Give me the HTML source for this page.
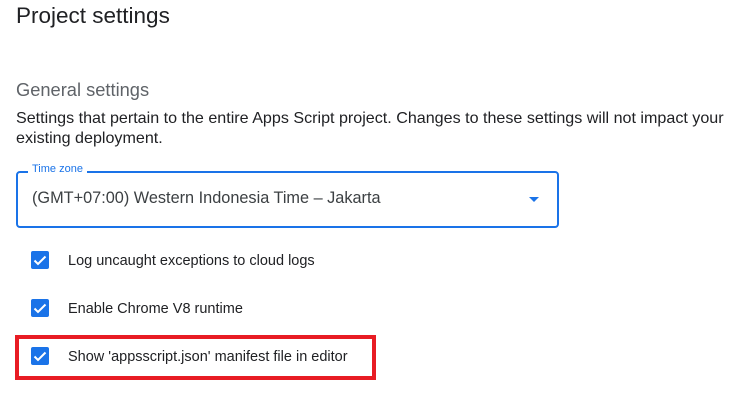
<!DOCTYPE html>
<html><head><style>
body{margin:0;width:753px;height:402px;background:#fff;font-family:"Liberation Sans",sans-serif;position:relative;overflow:hidden;color:#202124}
.a{position:absolute;white-space:nowrap}
.cb{position:absolute;left:31px;width:18px;height:18px;background:#1a73e8;border-radius:2px}
.cb svg{position:absolute;left:0;top:0}
</style></head><body>
<div class="a" style="left:16px;top:3px;font-size:22.5px;color:#202124">Project settings</div>
<div class="a" style="left:16px;top:79px;font-size:18.3px;color:#5f6368">General settings</div>
<div class="a" style="left:16px;top:108px;font-size:16.1px;line-height:20px;color:#202124">Settings that pertain to the entire Apps Script project. Changes to these settings will not impact your<br>existing deployment.</div>
<div style="position:absolute;left:16px;top:171px;width:539px;height:53px;border:2px solid #1a73e8;border-radius:4px"></div>
<div class="a" style="left:28px;top:163px;background:#fff;padding:0 4px;font-size:11px;color:#1a73e8">Time zone</div>
<div class="a" style="left:32px;top:189px;font-size:16.3px;color:#3c4043">(GMT+07:00) Western Indonesia Time – Jakarta</div>
<div style="position:absolute;left:529px;top:197px;width:0;height:0;border-left:5px solid transparent;border-right:5px solid transparent;border-top:5px solid #1a73e8"></div>
<div class="cb" style="top:251px"><svg width="18" height="18"><path d="M3.5 9.5l3.5 3.5L14.5 5.5" stroke="#fff" stroke-width="2" fill="none"/></svg></div>
<div class="a" style="left:68px;top:253px;font-size:14.5px">Log uncaught exceptions to cloud logs</div>
<div class="cb" style="top:299px"><svg width="18" height="18"><path d="M3.5 9.5l3.5 3.5L14.5 5.5" stroke="#fff" stroke-width="2" fill="none"/></svg></div>
<div class="a" style="left:68px;top:301px;font-size:14.5px">Enable Chrome V8 runtime</div>
<div class="cb" style="top:347px"><svg width="18" height="18"><path d="M3.5 9.5l3.5 3.5L14.5 5.5" stroke="#fff" stroke-width="2" fill="none"/></svg></div>
<div class="a" style="left:68px;top:349px;font-size:14.5px">Show 'appsscript.json' manifest file in editor</div>
<div style="position:absolute;left:15px;top:335px;width:353px;height:37px;border:4px solid #e81c24"></div>
</body></html>
